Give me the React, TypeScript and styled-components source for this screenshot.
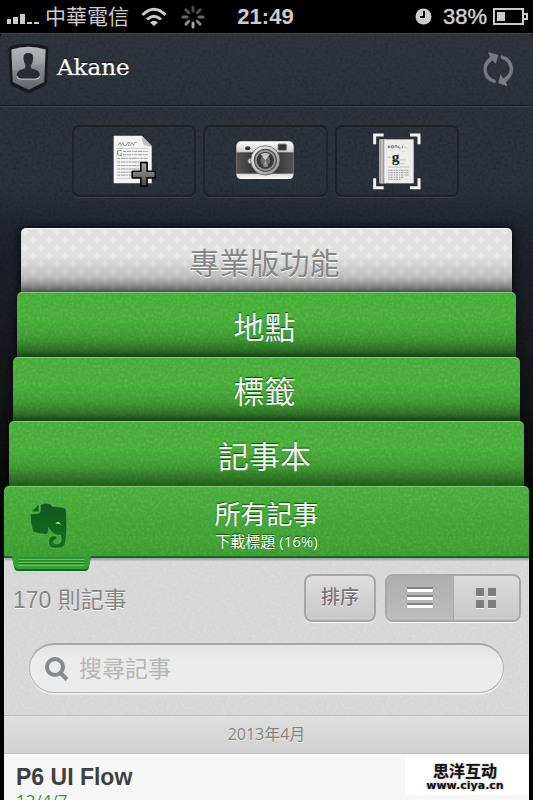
import React, { useState } from 'react';
import styled, { createGlobalStyle, css } from 'styled-components';

const sans = '"Liberation Sans", "Noto Sans CJK TC", sans-serif';
const humanist = '"Open Sans", "Noto Sans CJK TC", sans-serif';

const svgUrl = (body: string, w: number, h: number) =>
  `url("data:image/svg+xml,${encodeURIComponent(
    `<svg xmlns='http://www.w3.org/2000/svg' width='${w}' height='${h}'>${body}</svg>`
  )}")`;

const grain = (strength: number, shade: number) =>
  svgUrl(
    `<filter id='n'><feTurbulence type='fractalNoise' baseFrequency='0.35' numOctaves='3' stitchTiles='stitch'/><feColorMatrix values='0 0 0 0 ${shade} 0 0 0 0 ${shade} 0 0 0 0 ${shade} ${strength} 0 0 0 ${-strength * 0.4}'/></filter><rect width='160' height='160' filter='url(#n)'/>`,
    160,
    160
  );

const darkGrain = grain(0.4, 0);
const greenGrain = grain(0.3, 0.9);
const paperGrain = grain(0.35, 1);

const stars = svgUrl(
  `<g fill='#fff' fill-opacity='0.35'><path d='M4 0L5.3 2.7L8 4L5.3 5.3L4 8L2.7 5.3L0 4L2.7 2.7Z'/><path d='M12 8L13.3 10.7L16 12L13.3 13.3L12 16L10.7 13.3L8 12L10.7 10.7Z'/></g>`,
  16,
  16
);

const GlobalStyle = createGlobalStyle`
  *, *::before, *::after { box-sizing: border-box; }
  body { margin: 0; background: #000; font-family: ${sans}; }
  button, input { font: inherit; }
  button { border: 0; padding: 0; margin: 0; background: none; cursor: pointer; }
  svg { display: block; flex: none; }
`;

const Screen = styled.div`
  position: relative;
  display: flex;
  flex-direction: column;
  height: 100vh;
  overflow: hidden;
  background: #000;
`;

const StatusBar = styled.header`
  display: grid;
  grid-template-columns: 1fr auto 1fr;
  align-items: center;
  flex: none;
  height: 33px;
  padding: 0 5px 0 7px;
  color: #cbcbcb;
  font-size: 22px;
  line-height: 32px;
`;

const StatusGroup = styled.div<{ $end?: boolean }>`
  display: flex;
  align-items: center;
  justify-content: ${(p) => (p.$end ? 'flex-end' : 'flex-start')};
`;

const Carrier = styled.span`
  margin: 0 12px 0 6px;
  font-size: 21px;
`;

const Spinner = styled.span`
  margin-left: 14px;
`;

const Clock = styled.time`
  margin-right: 4px;
  font-weight: 700;
`;

const Charge = styled.span`
  margin: 0 6px 0 11px;
  text-shadow: 0 0 1px #cbcbcb;
`;

const Shell = styled.div`
  display: flex;
  flex: 1;
  flex-direction: column;
  border-radius: 5px 5px 0 0;
  background: ${darkGrain}, linear-gradient(#31363e 0, #2e333b 72px, #2d333c 150px, #20242b 200px, #14161a 350px, #060607 480px, #000 540px);
`;

const Account = styled.div`
  display: flex;
  align-items: center;
  justify-content: space-between;
  flex: none;
  height: 74px;
  padding: 0 19px 2px 8px;
  border-bottom: 1px solid #3c424a;
  box-shadow: inset 0 1px 0 #414750, inset 0 -1px 0 #1b1d21;
`;

const Profile = styled.button`
  display: flex;
  align-items: center;
  gap: 8px;
  color: #fff;
  font-family: "DejaVu Serif", serif;
  font-size: 23px;
  line-height: 28px;
  text-shadow: 0 -1px 1px #000, 0 0 1px #fff;
`;

const ProfileName = styled.span`
  padding-bottom: 4px;
`;

const Toolbar = styled.nav`
  display: grid;
  grid-template-columns: repeat(3, 1fr);
  gap: 7px;
  flex: none;
  padding: 18px 74px 31px 72px;
`;

const Tool = styled.button`
  display: flex;
  align-items: center;
  justify-content: center;
  height: 72px;
  border: 2px solid #202226;
  border-radius: 7px;
  box-shadow: 0 1px 0 #3b4049;
`;

const Stack = styled.nav`
  display: flex;
  flex: none;
  flex-direction: column;
`;

const tabTones = {
  grey: css`
    padding: 8px 4px 0 0;
    color: #858585;
    font-size: 30px;
    text-shadow: 0 1px 0 #fff;
    background: linear-gradient(rgba(0, 0, 0, 0) 45%, rgba(0, 0, 0, 0.14) 75%, rgba(0, 0, 0, 0.5) 100%), ${stars}, #e0e0e0;
    box-shadow: inset 0 1px 0 #fff, 0 0 10px #000;
  `,
  green: css`
    padding: 8px 4px 0 0;
    color: #f0f0f0;
    font-size: 31px;
    text-shadow: 0 -1px 1px #0e5010;
    background: linear-gradient(rgba(0, 30, 0, 0) 40%, rgba(0, 30, 0, 0.14) 70%, rgba(0, 20, 0, 0.55) 100%), ${greenGrain}, #46ae37;
    box-shadow: inset 0 1px 0 #7ed06d, 0 0 8px rgba(0, 0, 0, 0.6);
  `,
  front: css`
    padding: 6px 0 0;
    color: #fff;
    text-shadow: 0 -1px 1px #0e5010;
    background: linear-gradient(rgba(0, 50, 0, 0), rgba(0, 50, 0, 0.14)), ${greenGrain}, #46ae37;
    box-shadow: inset 0 1px 0 #7ed06d, inset 0 -2px 0 #11692c;
  `,
};

const Tab = styled.button<{ $tone: keyof typeof tabTones; $inset: number; $height: number }>`
  position: relative;
  display: flex;
  flex-direction: column;
  align-items: center;
  justify-content: center;
  height: ${(p) => p.$height}px;
  margin: 0 ${(p) => p.$inset}px;
  border-radius: 5px 5px 0 0;
  line-height: 40px;
  ${(p) => tabTones[p.$tone]}
`;

const TabTitle = styled.span`
  font-size: 26px;
  line-height: 32px;
`;

const TabDetail = styled.span`
  font-family: ${humanist};
  font-size: 15px;
  line-height: 20px;
`;

const TabLogo = styled.span`
  position: absolute;
  top: 16px;
  left: 25px;
`;

const TabFoot = styled.span`
  position: absolute;
  top: 70px;
  left: 8px;
  z-index: 1;
`;

const Panel = styled.main`
  flex: 1;
  margin: 0 4px;
  background: ${paperGrain}, #d6d6d6;
  box-shadow: inset 0 2px 2px rgba(0, 0, 0, 0.25), inset 1px 0 0 #f2f2f2, inset -1px 0 0 #f2f2f2;
`;

const ControlRow = styled.div`
  display: flex;
  align-items: center;
  gap: 9px;
  padding: 16px 8px 0 9px;
`;

const Count = styled.h2`
  flex: 1;
  height: 48px;
  margin: 0;
  padding-top: 2px;
  color: #858585;
  font-size: 23px;
  font-weight: 400;
  line-height: 48px;
  text-shadow: 0 1px 0 #fff;
`;

const SortButton = styled.button`
  width: 72px;
  height: 48px;
  border: 2px solid #a6a6a6;
  border-radius: 8px;
  background: linear-gradient(#dcdcdc, #c9c9c9);
  box-shadow: 0 1px 0 #f4f4f4;
  color: #747474;
  font-size: 19px;
  font-weight: 500;
  line-height: 40px;
  text-shadow: 0 1px 0 #fff;
`;

const Segments = styled.div`
  display: flex;
  width: 136px;
  height: 48px;
  overflow: hidden;
  border: 2px solid #a6a6a6;
  border-radius: 8px;
  box-shadow: 0 1px 0 #f4f4f4;
`;

const Segment = styled.button<{ $on: boolean }>`
  display: flex;
  flex: 1;
  align-items: center;
  justify-content: center;
  color: ${(p) => (p.$on ? '#fff' : '#7c7c7c')};
  background: ${(p) => (p.$on ? 'linear-gradient(#aeaeae, #bdbdbd)' : 'linear-gradient(#dadada, #c9c9c9)')};
  & + & {
    border-left: 1px solid #a6a6a6;
  }
`;

const SearchBox = styled.label`
  display: flex;
  align-items: center;
  gap: 10px;
  height: 50px;
  margin: 21px 25px 22px;
  padding: 2px 15px 0;
  border: 1px solid #b4b4b4;
  border-top: 2px solid #a8a8a8;
  border-radius: 25px;
  background: linear-gradient(#e2e2e2, #ebebeb 30%);
  box-shadow: 0 2px 0 #efefef;
`;

const SearchInput = styled.input`
  flex: 1;
  min-width: 0;
  height: 40px;
  padding: 0;
  border: 0;
  outline: 0;
  background: none;
  color: #666;
  font-size: 23px;
  &::placeholder {
    color: #b6b6b6;
    opacity: 1;
  }
`;

const Month = styled.h3`
  height: 39px;
  margin: 0;
  border-top: 1px solid #b9b9b9;
  border-bottom: 1px solid #bdbdbd;
  background: linear-gradient(#dedede, #d2d2d2);
  box-shadow: inset 0 1px 0 #e9e9e9;
  color: #83847c;
  font-family: ${humanist};
  font-size: 16px;
  font-weight: 400;
  line-height: 37px;
  text-align: center;
  text-shadow: 0 1px 0 #eee;
`;

const Note = styled.article`
  min-height: 90px;
  padding: 7px 12px;
  border-top: 2px solid #fff;
  background: #f6f6f6;
`;

const NoteTitle = styled.h4`
  margin: 0;
  color: #3f3f3f;
  font-size: 23px;
  line-height: 28px;
`;

const NoteDate = styled.p`
  margin: 0;
  color: #35954a;
  font-family: ${humanist};
  font-size: 17px;
  line-height: 20px;
`;

const Stamp = styled.div`
  position: absolute;
  right: 4px;
  bottom: 5px;
  width: 124px;
  padding: 3px 4px 3px 0;
  background: #fff;
  color: #111;
  text-align: center;
  text-shadow: 0 0 2px #888;
`;

const StampName = styled.div`
  font-family: "Noto Sans CJK SC", sans-serif;
  font-size: 16px;
  font-weight: 700;
  line-height: 20px;
`;

const StampSite = styled.div`
  font-family: "DejaVu Sans", sans-serif;
  font-size: 11px;
  font-weight: 700;
  line-height: 12px;
`;

const SignalIcon = () => (
  <svg width="32" height="17" viewBox="0 0 32 17" fill="#cbcbcb">
    <rect x="0" y="11" width="4" height="5" />
    <rect x="6" y="9" width="5" height="7" />
    <rect x="13" y="6" width="5" height="10" />
    <rect x="20" y="14" width="5" height="2" />
    <rect x="27" y="14" width="5" height="2" />
  </svg>
);

const WifiIcon = () => (
  <svg width="26" height="20" viewBox="0 0 26 20" fill="none" stroke="#cbcbcb" strokeWidth="3">
    <path d="M1.5 8Q13-3.5 24.500 8" />
    <path d="M6 12.500Q13 6 20 12.500" />
    <path d="M13 19L9 15.500Q13 12 17 15.500Z" fill="#cbcbcb" stroke="none" />
  </svg>
);

const SpinnerIcon = () => (
  <svg width="24" height="24" viewBox="-12 -12 24 24" strokeWidth="3" strokeLinecap="round">
    {['#4a4a4a', '#505050', '#686868', '#858585', '#a5a5a5', '#8a8a8a', '#666', '#505050'].map((c, i) => (
      <path key={i} d="M0 -6V-10" stroke={c} transform={`rotate(${i * 45})`} />
    ))}
  </svg>
);

const AlarmIcon = () => (
  <svg width="17" height="17" viewBox="0 0 17 17">
    <circle cx="8.500" cy="8.500" r="8" fill="#cbcbcb" />
    <path d="M9 3V9H5" fill="none" stroke="#000" strokeWidth="2" />
  </svg>
);

const BatteryIcon = () => (
  <svg width="35" height="17" viewBox="0 0 35 17">
    <rect x="1" y="1" width="29" height="15" fill="none" stroke="#cbcbcb" strokeWidth="2" />
    <rect x="4" y="4" width="8" height="9" fill="#cbcbcb" />
    <path d="M31 6H34V11H31" fill="none" stroke="#cbcbcb" strokeWidth="2" />
  </svg>
);

const ShieldIcon = () => (
  <svg width="41" height="51" viewBox="22 130 122 152">
    <defs>
      <linearGradient id="steel" x1="0" y1="0" x2="0" y2="1">
        <stop offset="0" stopColor="#a9adb1" />
        <stop offset="1" stopColor="#5f656b" />
      </linearGradient>
    </defs>
    <path d="M24 141Q83 123 142 141L138 248Q137 255 130 258L83 281L36 258Q29 255 28 248Z" fill="#17191c" />
    <path d="M32 149Q83 134 134 149L130 246L83 269L36 246Z" fill="url(#steel)" />
    <path d="M32 149Q83 134 134 149L132 190Q90 196 34 214Z" fill="#fff" fillOpacity=".13" />
    <path d="M68 176Q67 160 82 160Q98 160 97 176Q96 190 90 197L91 205Q116 211 117 224Q117 235 104 236H60Q48 235 48 224Q50 211 73 205L74 197Q69 189 68 176Z" fill="#292d31" />
    <path d="M49 229Q53 238 60 238H104Q114 237 117 229" fill="none" stroke="#b9bdc1" strokeWidth="3" />
  </svg>
);

const SyncIcon = () => (
  <svg width="32" height="36" viewBox="648 150 96 108">
    <g fill="#777b80" stroke="#24272c" strokeWidth="2">
      <path d="M690 248Q651 240 651 203Q652 181 671 168L664 151L698 161L690 192L680 179Q663 190 663 206Q665 230 690 236Z" />
      <path d="M703 160Q742 170 743 205Q740 230 721 243L727 258L695 247L703 217L712 231Q729 222 730 204Q728 180 703 173Z" />
    </g>
  </svg>
);

const NewNoteIcon = () => (
  <svg width="43" height="52" viewBox="163 77 130 156">
    <defs>
      <linearGradient id="plus" x1="0" y1="0" x2="0" y2="1">
        <stop offset="0" stopColor="#aaa" />
        <stop offset="1" stopColor="#444" />
      </linearGradient>
    </defs>
    <path d="M165 79H250L280 110V222H165Z" fill="#f3f3f3" />
    <path d="M250 79L280 110Q262 111 256 105Q251 98 250 79Z" fill="#bdbdbd" />
    <path d="M178 108L184 99L188 108L193 99L196 108H203L207 99H213L209 108H216L220 99L225 108L229 99H235" fill="none" stroke="#777" strokeWidth="2" />
    <path d="M176 117H268M176 208H222" stroke="#bbb" strokeWidth="2" />
    <text x="174" y="140" fontFamily="Liberation Serif" fontSize="23" fill="#46553a">G</text>
    <g stroke="#999" strokeWidth="3" strokeDasharray="9 2 14 2 5 2">
      <path d="M193 126H268M193 136H268M176 147H268M176 158H268M176 169H268M176 179H268M176 189H225M176 198H225" />
    </g>
    <path d="M247 160H266V186H291V206H266V231H247V206H221V186H247Z" fill="url(#plus)" stroke="#0b0b0b" strokeWidth="5" strokeLinejoin="round" />
  </svg>
);

const CameraIcon = () => (
  <svg width="58" height="40" viewBox="0 0 174 120">
    <defs>
      <linearGradient id="chrome" x1="0" y1="0" x2="0" y2="1">
        <stop offset="0" stopColor="#fff" />
        <stop offset=".3" stopColor="#c9c9c9" />
        <stop offset=".8" stopColor="#c4c4c4" />
        <stop offset="1" stopColor="#fff" />
      </linearGradient>
      <linearGradient id="leather">
        <stop offset="0" stopColor="#555" />
        <stop offset=".5" stopColor="#222" />
        <stop offset="1" stopColor="#555" />
      </linearGradient>
      <linearGradient id="ring" x1="0" y1="0" x2="1" y2="1">
        <stop offset="0" stopColor="#fff" />
        <stop offset="1" stopColor="#8a8a8a" />
      </linearGradient>
    </defs>
    <rect x="1" y="1" width="172" height="113" rx="14" fill="url(#chrome)" />
    <rect x="1" y="34" width="172" height="64" fill="url(#leather)" />
    <ellipse cx="35" cy="22" rx="8" ry="6" fill="#333" />
    <rect x="126" y="9" width="26" height="19" rx="3" fill="#333" stroke="#888" strokeWidth="3" />
    <circle cx="43" cy="60" r="8" fill="#ccc" stroke="#444" strokeWidth="2" />
    <circle cx="88" cy="58" r="44" fill="url(#ring)" stroke="#444" strokeWidth="2" />
    <circle cx="88" cy="58" r="35" fill="#555" />
    <circle cx="88" cy="58" r="31" fill="#9a9a9a" />
    <circle cx="88" cy="58" r="26" fill="#3a3a3a" />
    <circle cx="88" cy="58" r="17" fill="#6a6a6a" stroke="#222" strokeWidth="3" />
    <path d="M88 58L74 40Q88 30 102 40Z" fill="#e0e0e0" fillOpacity=".8" />
    <path d="M88 58L98 76Q88 81 80 76Z" fill="#bbb" fillOpacity=".6" />
  </svg>
);

const ScanIcon = () => (
  <svg width="48" height="57" viewBox="338 62 144 171">
    <rect x="357" y="81" width="103" height="132" fill="#ececec" />
    <path d="M359 81H372V213H359Z" fill="#999" />
    <path d="M365 81V213M375 81V213" stroke="#eee" strokeWidth="3" />
    <path d="M384 108V100L389 107V100M394 100H399V107H394ZM404 107V100H410V107M415 100V107H421M426 100V108" fill="none" stroke="#555" strokeWidth="2" />
    <text x="394" y="150" fontFamily="Liberation Serif" fontWeight="700" fontSize="46" fill="#222">g</text>
    <path d="M429 104L442 108M383 135H391M424 118H430M416 143H438M384 164H446M416 154H432" stroke="#aaa" strokeWidth="2" />
    <g stroke="#999" strokeWidth="3" strokeDasharray="4 2 7 3">
      <path d="M384 174H446M384 181H446M384 188H446M384 195H430M384 201H420" />
    </g>
    <g fill="none" stroke="#f2f2f2" strokeWidth="9">
      <path d="M343 96V68H370M449 68H476V96M343 198V226H370M449 226H476V198" />
    </g>
  </svg>
);

const ElephantLogo = () => (
  <svg width="39" height="47" viewBox="88 273 117 141">
    <defs>
      <linearGradient id="hide" x1="0" y1="0" x2="0" y2="1">
        <stop offset="0" stopColor="#10571f" />
        <stop offset="1" stopColor="#11701b" />
      </linearGradient>
    </defs>
    <g fill="url(#hide)" stroke="#7cc873" strokeOpacity=".6" strokeWidth="2" strokeLinejoin="round">
      <path d="M94 302L118 279V300Q117 303 113 303Z" />
      <path d="M92 309L117 307Q122 306 122 300V281Q136 273 151 279Q156 282 157 286L190 289Q199 291 200 299Q204 350 198 393Q195 411 178 411H160Q147 409 147 393Q147 376 160 375H171V386L163 387Q159 391 162 396Q171 402 182 396Q187 388 183 373Q158 373 147 350Q148 371 137 370Q115 369 100 362Q91 335 92 309Z" />
    </g>
    <path d="M167 339Q176 325 184 341Q176 336 167 339Z" fill="#a5d89b" />
  </svg>
);

const FootShape = () => (
  <svg width="79" height="16" viewBox="38 440 237 48">
    <path d="M38 443H275L268 476Q266 483 260 485H53Q46 483 45 476Z" fill="#11692c" />
    <path d="M38 440H275L267 472Q265 478 259 479H54Q48 478 46 472Z" fill="#37a033" />
    <path d="M57 446H255M57 455H255M57 463H255" stroke="#1b7a28" strokeWidth="3" />
    <path d="M57 450H255M57 459H255M57 468H255" stroke="#78c56c" strokeWidth="3" />
  </svg>
);

const ListIcon = () => (
  <svg width="26" height="22" viewBox="0 0 26 22">
    <path d="M0 1H26M0 9H26M0 17H26" stroke="#858585" strokeWidth="2" />
    <path d="M0 3.500H26M0 11.500H26M0 19.500H26" stroke="currentColor" strokeWidth="3" />
  </svg>
);

const GridIcon = () => (
  <svg width="20" height="21" viewBox="0 0 20 21">
    <path d="M0 1H8V9H0ZM12 1H20V9H12ZM0 13H8V21H0ZM12 13H20V21H12Z" fill="#eee" />
    <path d="M0 0H8V8H0ZM12 0H20V8H12ZM0 12H8V20H0ZM12 12H20V20H12Z" fill="currentColor" />
  </svg>
);

const SearchIcon = () => (
  <svg width="24" height="25" viewBox="0 0 24 25" fill="none" stroke="#868b90">
    <circle cx="10" cy="10" r="8" strokeWidth="4" />
    <path d="M16 16.500L22 22.500" strokeWidth="4" />
  </svg>
);

const tabs = [
  { label: '專業版功能', tone: 'grey', inset: 21, height: 64 },
  { label: '地點', tone: 'green', inset: 17, height: 65 },
  { label: '標籤', tone: 'green', inset: 13, height: 64 },
  { label: '記事本', tone: 'green', inset: 9, height: 65 },
] as const;

export default function App() {
  const [view, setView] = useState<'list' | 'grid'>('list');
  return (
    <Screen>
      <GlobalStyle />
      <StatusBar>
        <StatusGroup>
          <SignalIcon />
          <Carrier>中華電信</Carrier>
          <WifiIcon />
          <Spinner>
            <SpinnerIcon />
          </Spinner>
        </StatusGroup>
        <Clock>21:49</Clock>
        <StatusGroup $end>
          <AlarmIcon />
          <Charge>38%</Charge>
          <BatteryIcon />
        </StatusGroup>
      </StatusBar>
      <Shell>
        <Account>
          <Profile>
            <ShieldIcon />
            <ProfileName>Akane</ProfileName>
          </Profile>
          <button aria-label="同步">
            <SyncIcon />
          </button>
        </Account>
        <Toolbar>
          <Tool aria-label="新增記事">
            <NewNoteIcon />
          </Tool>
          <Tool aria-label="相機">
            <CameraIcon />
          </Tool>
          <Tool aria-label="掃描文件">
            <ScanIcon />
          </Tool>
        </Toolbar>
        <Stack>
          {tabs.map((t) => (
            <Tab key={t.label} $tone={t.tone} $inset={t.inset} $height={t.height}>
              {t.label}
            </Tab>
          ))}
          <Tab $tone="front" $inset={4} $height={72}>
            <TabLogo>
              <ElephantLogo />
            </TabLogo>
            <TabTitle>所有記事</TabTitle>
            <TabDetail>下載標題 (16%)</TabDetail>
            <TabFoot>
              <FootShape />
            </TabFoot>
          </Tab>
        </Stack>
        <Panel>
          <ControlRow>
            <Count>170 則記事</Count>
            <SortButton>排序</SortButton>
            <Segments role="group" aria-label="檢視方式">
              <Segment $on={view === 'list'} aria-label="清單" aria-pressed={view === 'list'} onClick={() => setView('list')}>
                <ListIcon />
              </Segment>
              <Segment $on={view === 'grid'} aria-label="格狀" aria-pressed={view === 'grid'} onClick={() => setView('grid')}>
                <GridIcon />
              </Segment>
            </Segments>
          </ControlRow>
          <SearchBox>
            <SearchIcon />
            <SearchInput type="search" placeholder="搜尋記事" aria-label="搜尋記事" />
          </SearchBox>
          <Month>2013年4月</Month>
          <Note>
            <NoteTitle>P6 UI Flow</NoteTitle>
            <NoteDate>12/4/7</NoteDate>
          </Note>
        </Panel>
      </Shell>
      <Stamp>
        <StampName>思洋互动</StampName>
        <StampSite>www.ciya.cn</StampSite>
      </Stamp>
    </Screen>
  );
}
